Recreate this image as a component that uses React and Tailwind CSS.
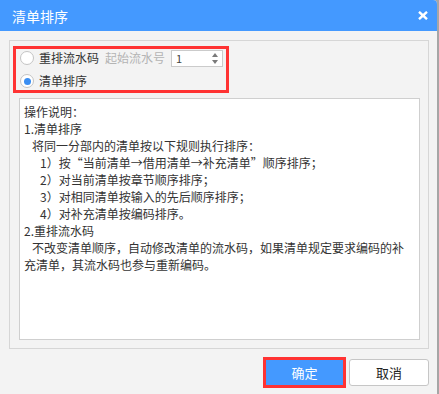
const FONT = { fontFamily: '"Microsoft YaHei", "Noto Sans CJK SC", "Noto Sans", sans-serif' };

const LINES = [
  { text: "操作说明：", indent: 0 },
  { text: "1.清单排序", indent: 0 },
  { text: "将同一分部内的清单按以下规则执行排序：", indent: 8 },
  { text: "1）按“当前清单→借用清单→补充清单”顺序排序；", indent: 16 },
  { text: "2）对当前清单按章节顺序排序；", indent: 16 },
  { text: "3）对相同清单按输入的先后顺序排序；", indent: 16 },
  { text: "4）对补充清单按编码排序。", indent: 16 },
  { text: "2.重排流水码", indent: 0 },
  { text: "不改变清单顺序，自动修改清单的流水码，如果清单规定要求编码的补", indent: 8 },
  { text: "充清单，其流水码也参与重新编码。", indent: 0 },
];

function Radio({ checked }) {
  return (
    <span className="flex h-[14px] w-[14px] shrink-0 items-center justify-center rounded-full border border-[#c4c4c4] bg-white">
      {checked && <span className="h-[7px] w-[7px] rounded-full bg-[#3a8ef2]" />}
    </span>
  );
}

export default function App() {
  return (
    <div className="flex h-[394px] w-[439px] bg-[#a6a6a6] [text-spacing-trim:space-all]" style={FONT}>
      <div className="flex h-[394px] w-[437px] flex-col overflow-hidden rounded-tr-[4px] bg-[#f3f3f3]">
        <div className="flex h-[31px] shrink-0 items-center justify-between bg-[#4499ff] pl-[12px] pr-[9px]">
          <span className="text-[14px] leading-none text-white">清单排序</span>
          <svg width="10" height="9" viewBox="0 0 10 9">
            <path d="M1 0.8 L9 8.2 M9 0.8 L1 8.2" stroke="white" strokeWidth="2.4" />
          </svg>
        </div>

        <div className="ml-[9px] mt-[9px] flex h-[309px] w-[420px] flex-col border border-[#d6d6d6] pl-[3px] pt-[5px]">
          <div className="flex h-[47px] w-[216px] flex-col justify-center gap-[6px] border-[3px] border-[#ff3333] pl-[4px]">
            <div className="flex h-[17px] items-center text-[12px] leading-none">
              <Radio checked={false} />
              <span className="ml-[5px] text-[#333]">重排流水码</span>
              <span className="ml-[6px] text-[#b4b4b4]">起始流水号</span>
              <div className="ml-[6px] flex h-[17px] w-[52px] items-center justify-between border border-[#cbcbcb] bg-white pl-[4px] pr-[4px]">
                <span className="text-[11px] text-[#444]">1</span>
                <span className="flex flex-col items-center gap-[3px]">
                  <svg width="6" height="4" viewBox="0 0 6 4">
                    <path d="M3 0 L6 4 L0 4 Z" fill="#7a7a7a" />
                  </svg>
                  <svg width="6" height="4" viewBox="0 0 6 4">
                    <path d="M0 0 L6 0 L3 4 Z" fill="#7a7a7a" />
                  </svg>
                </span>
              </div>
            </div>
            <div className="flex h-[17px] items-center text-[12px] leading-none">
              <Radio checked />
              <span className="ml-[5px] text-[#333]">清单排序</span>
            </div>
          </div>

          <div className="ml-[6px] mt-[5px] h-[242px] w-[401px] border border-[#cfcfcf] bg-white pl-[4px] pt-[4px] text-[12px] leading-[17px] text-[#333]">
            {LINES.map((line) => (
              <div
                key={line.text}
                className="whitespace-nowrap"
                style={{ paddingLeft: line.indent }}
              >
                {line.text}
              </div>
            ))}
          </div>
        </div>

        <div className="mt-[8px] flex items-center justify-end gap-[3px] pr-[8px]">
          <div className="flex h-[31px] w-[83px] border-[3px] border-[#ff3333]">
            <button className="flex flex-1 items-center justify-center bg-[#4499ff] text-[13px] text-white">
              确定
            </button>
          </div>
          <button className="flex h-[27px] w-[80px] items-center justify-center rounded-[3px] border border-[#c6c6c6] bg-white text-[13px] text-[#222]">
            取消
          </button>
        </div>
      </div>
    </div>
  );
}
